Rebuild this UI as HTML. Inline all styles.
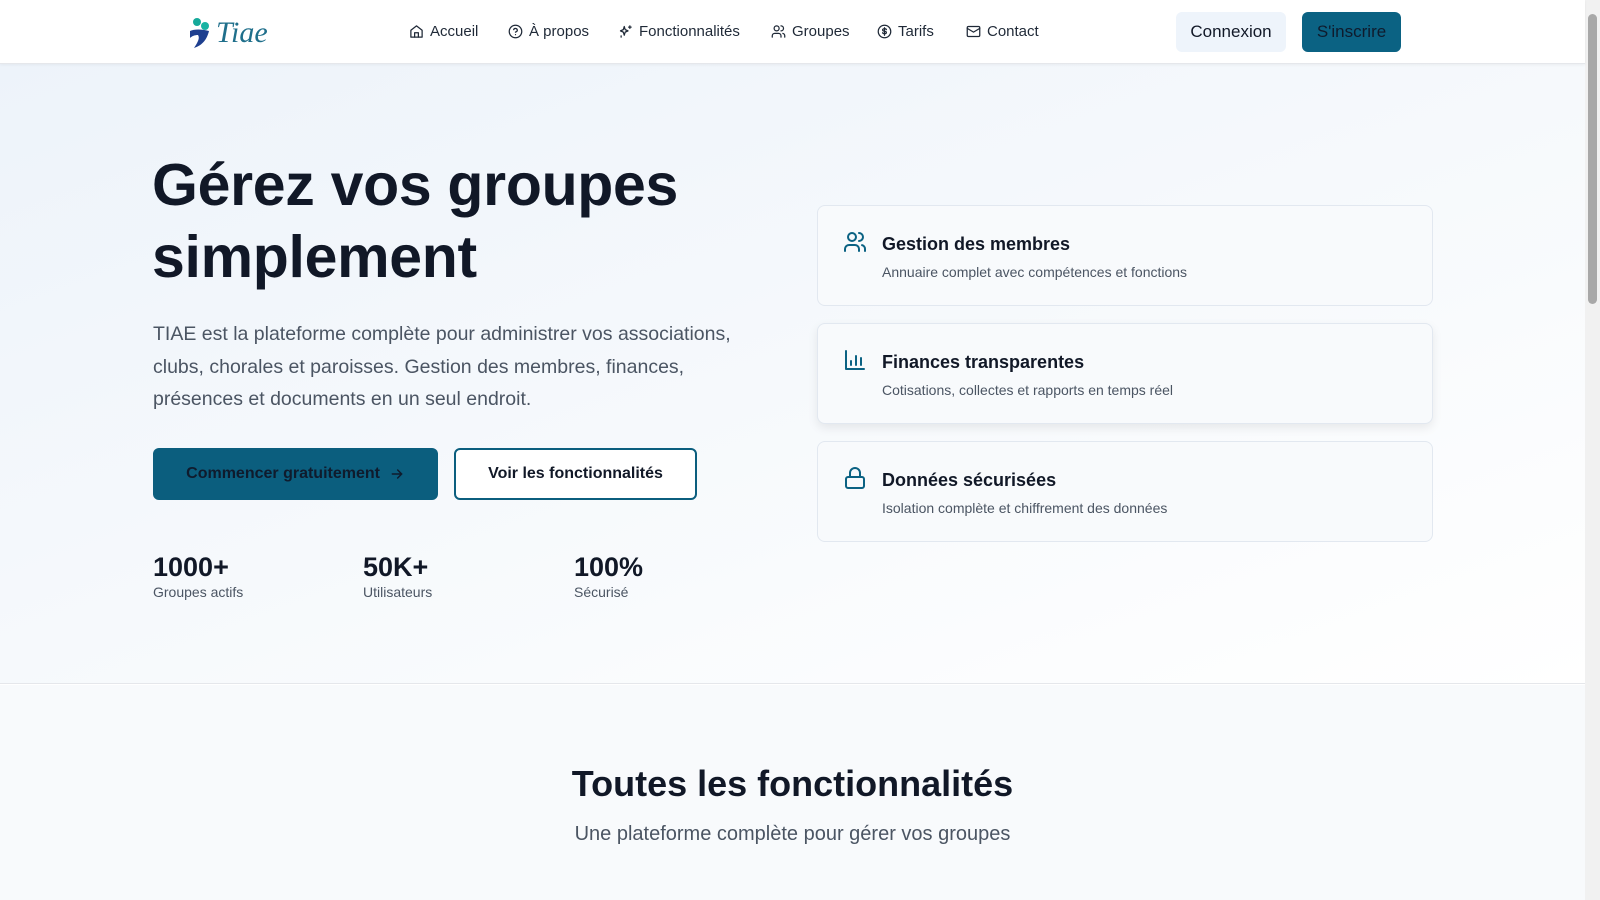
<!DOCTYPE html>
<html><head><meta charset="utf-8"><style>
*{box-sizing:border-box;margin:0;padding:0}
body{width:1600px;height:900px;overflow:hidden;font-family:"Liberation Sans",sans-serif;color:#111827;background:#fff;position:relative}
.nav{position:absolute;left:0;top:0;width:1585px;height:64px;background:#fff;border-bottom:1px solid #e5e7eb;box-shadow:0 1px 3px rgba(0,0,0,.05);z-index:2}
.nav a{position:absolute;top:23px;font-size:15px;color:#1f2937;display:flex;align-items:center;gap:6px;text-decoration:none}
.nav a svg{width:15px;height:15px;stroke:#1f2937;fill:none;stroke-width:2;stroke-linecap:round;stroke-linejoin:round}
.btn1{position:absolute;left:1176px;top:12px;width:110px;height:40px;background:#eef4fb;border-radius:6px;font-size:17px;display:flex;align-items:center;justify-content:center;color:#111827}
.btn2{position:absolute;left:1302px;top:12px;width:99px;height:40px;background:#0b6283;border-radius:6px;font-size:17px;display:flex;align-items:center;justify-content:center;color:#0f1b2d}
.hero{position:absolute;left:0;top:64px;width:1585px;height:620px;background:linear-gradient(160deg,#edf3fa 0%,#f6f9fc 50%,#fff 100%);border-bottom:1px solid #e5e7eb}
h1{position:absolute;left:152px;top:85px;font-size:59px;line-height:72px;font-weight:bold;color:#111827;letter-spacing:-.3px}
.p{position:absolute;left:153px;top:254px;width:620px;font-size:19.5px;line-height:32.5px;color:#4b5563}
.cta{position:absolute;top:384px;height:52px;border-radius:6px;display:flex;align-items:center;justify-content:center;font-size:16px;font-weight:bold}
.stat{position:absolute;top:486px}
.stat b{display:block;font-size:27px;line-height:34px}
.stat span{font-size:14px;color:#4b5563}
.card{position:absolute;left:817px;width:616px;height:101px;border:1px solid #e2e8f0;border-radius:8px;background:#f8fafc}
.card svg{position:absolute;left:25px;top:24px;width:24px;height:24px;stroke:#0b6283;fill:none;stroke-width:2;stroke-linecap:round;stroke-linejoin:round}
.card b{position:absolute;left:64px;top:28px;font-size:18px}
.card span{position:absolute;left:64px;top:58px;font-size:14px;color:#4b5563}
.sec{position:absolute;left:0;top:685px;width:1585px;height:215px;background:#f8fafc}
.sb{position:absolute;left:1585px;top:0;width:15px;height:900px;background:#f1f1f1}
.sb div{position:absolute;left:3px;top:14px;width:9px;height:290px;background:#a8a8a8;border-radius:5px}
</style></head><body>
<div class="nav">
 <div style="position:absolute;left:186px;top:16px;display:flex;align-items:center">
  <svg width="28" height="32" viewBox="0 0 26 32"><circle cx="10" cy="5" r="4" fill="#16a99a"/><circle cx="18" cy="9" r="4" fill="#17b3a3"/><path d="M3 14c4-2 12-2 19 0-2 8-6 14-15 17 4-6 6-10 4-13-3 0-6 1-8 3z" fill="#1e3f8f"/></svg>
  <span style="font-family:'Liberation Serif',serif;font-style:italic;font-size:30px;color:#1f6f8b;margin-left:2px">Tiae</span>
 </div>
 <a style="left:409px"><svg viewBox="0 0 24 24"><path d="M3 10l9-7 9 7v11H3z"/><path d="M9 21v-7h6v7"/></svg>Accueil</a>
 <a style="left:508px"><svg viewBox="0 0 24 24"><circle cx="12" cy="12" r="10"/><path d="M9.1 9a3 3 0 015.8 1c0 2-3 3-3 3M12 17h.01"/></svg>À propos</a>
 <a style="left:618px"><svg viewBox="0 0 24 24"><path d="M10 4l1.5 5L16 11l-4.5 2L10 18l-1.5-5L4 11l4.5-2z"/><path d="M19 3v4M17 5h4M5 19v2"/></svg>Fonctionnalités</a>
 <a style="left:771px"><svg viewBox="0 0 24 24"><circle cx="9" cy="7" r="4"/><path d="M2 21v-2a4 4 0 014-4h6a4 4 0 014 4v2M16 3a4 4 0 010 8M22 21v-2a4 4 0 00-3-3.9"/></svg>Groupes</a>
 <a style="left:877px"><svg viewBox="0 0 24 24"><circle cx="12" cy="12" r="10"/><path d="M15 9a3 2 0 00-3-1.5c-2 0-3 1-3 2s1 1.8 3 2 3 1 3 2-1 2-3 2a3 2 0 01-3-1.5M12 6v12"/></svg>Tarifs</a>
 <a style="left:966px"><svg viewBox="0 0 24 24"><rect x="2" y="4" width="20" height="16" rx="2"/><path d="M22 7l-10 6L2 7"/></svg>Contact</a>
 <div class="btn1">Connexion</div>
 <div class="btn2">S'inscrire</div>
</div>
<div class="hero">
 <h1>Gérez vos groupes<br>simplement</h1>
 <div class="p">TIAE est la plateforme complète pour administrer vos associations, clubs, chorales et paroisses. Gestion des membres, finances, présences et documents en un seul endroit.</div>
 <div class="cta" style="left:153px;width:285px;background:#0b5e7e;color:#0f1b2d">Commencer gratuitement &nbsp;<svg width="16" height="16" viewBox="0 0 24 24" fill="none" stroke="#0f1b2d" stroke-width="2.2" stroke-linecap="round"><path d="M5 12h14M13 6l6 6-6 6"/></svg></div>
 <div class="cta" style="left:454px;width:243px;background:#fff;border:2px solid #0b5e7e;color:#111827">Voir les fonctionnalités</div>
 <div class="stat" style="left:153px"><b>1000+</b><span>Groupes actifs</span></div>
 <div class="stat" style="left:363px"><b>50K+</b><span>Utilisateurs</span></div>
 <div class="stat" style="left:574px"><b>100%</b><span>Sécurisé</span></div>
 <div class="card" style="top:141px"><svg viewBox="0 0 24 24"><circle cx="9" cy="7" r="4"/><path d="M2 21v-2a4 4 0 014-4h6a4 4 0 014 4v2M16 3a4 4 0 010 8M22 21v-2a4 4 0 00-3-3.9"/></svg><b>Gestion des membres</b><span>Annuaire complet avec compétences et fonctions</span></div>
 <div class="card" style="top:259px;box-shadow:0 4px 10px rgba(0,0,0,.08)"><svg viewBox="0 0 24 24"><path d="M3 3v18h18M8 17v-4M13 17V8M18 17v-7"/></svg><b>Finances transparentes</b><span>Cotisations, collectes et rapports en temps réel</span></div>
 <div class="card" style="top:377px"><svg viewBox="0 0 24 24"><rect x="3" y="11" width="18" height="11" rx="2"/><path d="M7 11V7a5 5 0 0110 0v4"/></svg><b>Données sécurisées</b><span>Isolation complète et chiffrement des données</span></div>
</div>
<div class="sec">
 <div style="position:absolute;left:0;width:1585px;top:78px;text-align:center;font-size:36px;font-weight:bold;color:#111827">Toutes les fonctionnalités</div>
 <div style="position:absolute;left:0;width:1585px;top:138px;text-align:center;font-size:20px;color:#4b5563">Une plateforme complète pour gérer vos groupes</div>
</div>
<div class="sb"><div></div></div>
</body></html>
